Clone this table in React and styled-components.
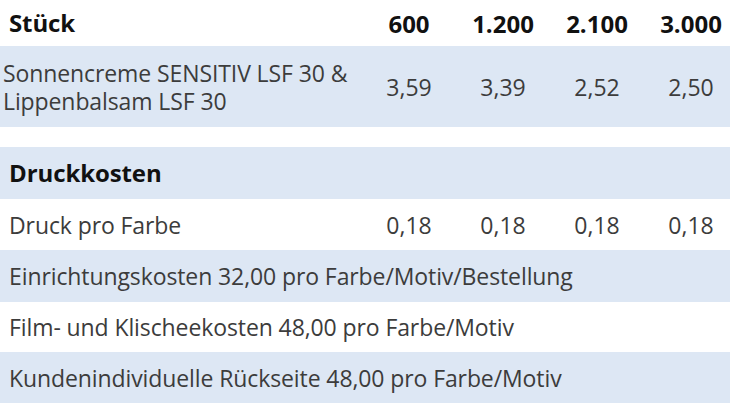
import React from 'react';
import styled, { createGlobalStyle } from 'styled-components';

const GlobalStyle = createGlobalStyle`
	html, body { margin: 0; padding: 0; background: #fff; overflow: hidden; }
	body { font-family: "Open Sans", "Liberation Sans", sans-serif; }
`

const Table = styled.div`
	width: 730px;
	display: grid;
	grid-template-columns: 1fr repeat(4, 94px);
	color: #333;
	font-size: 23px;
`

const Row = styled.div`
	display: contents;
	& > div { background: ${p => (p.$shaded ? '#dde7f4' : '#fff')}; height: ${p => p.$h}px; }
`

const Label = styled.div`
	grid-column: ${p => (p.$span ? '1 / -1' : 'auto')};
	display: flex;
	align-items: center;
	padding-left: ${p => p.$pad || 9}px;
	line-height: 28px;
	font-size: ${p => (p.$bold ? 24 : 23)}px;
	font-weight: ${p => (p.$bold ? 700 : 400)};
	color: ${p => (p.$bold ? '#111' : '#3c3c3c')};
	letter-spacing: -0.1px;
	white-space: nowrap;
`

const Num = styled.div`
	display: flex;
	align-items: center;
	justify-content: center;
	padding-left: 16px;
	font-size: ${p => (p.$bold ? 24 : 23)}px;
	font-weight: ${p => (p.$bold ? 700 : 400)};
	color: ${p => (p.$bold ? '#111' : '#3c3c3c')};
`

const qty = ['600', '1.200', '2.100', '3.000'];
const price = ['3,59', '3,39', '2,52', '2,50'];
const druck = ['0,18', '0,18', '0,18', '0,18'];

const extras = [
	{ text: 'Einrichtungskosten 32,00 pro Farbe/Motiv/Bestellung', shaded: true, h: 52 },
	{ text: 'Film- und Klischeekosten 48,00 pro Farbe/Motiv', shaded: false, h: 50 },
	{ text: 'Kundenindividuelle Rückseite 48,00 pro Farbe/Motiv', shaded: true, h: 51 },
];

export default function App() {
	return (
		<>
			<GlobalStyle />
			<Table>
				<Row $h={46}>
					<Label $bold>Stück</Label>
					{qty.map(q => <Num key={q} $bold>{q}</Num>)}
				</Row>
				<Row $shaded $h={81}>
					<Label $pad={3}>Sonnencreme SENSITIV LSF 30 &amp;<br />Lippenbalsam LSF 30</Label>
					{price.map((v, i) => <Num key={i}>{v}</Num>)}
				</Row>
				<Row $h={20}>
					<Label $span />
				</Row>
				<Row $shaded $h={52}>
					<Label $span $bold>Druckkosten</Label>
				</Row>
				<Row $h={51}>
					<Label>Druck pro Farbe</Label>
					{druck.map((v, i) => <Num key={i}>{v}</Num>)}
				</Row>
				{extras.map(e => (
					<Row key={e.text} $shaded={e.shaded} $h={e.h}>
						<Label $span>{e.text}</Label>
					</Row>
				))}
			</Table>
		</>
	);
}
